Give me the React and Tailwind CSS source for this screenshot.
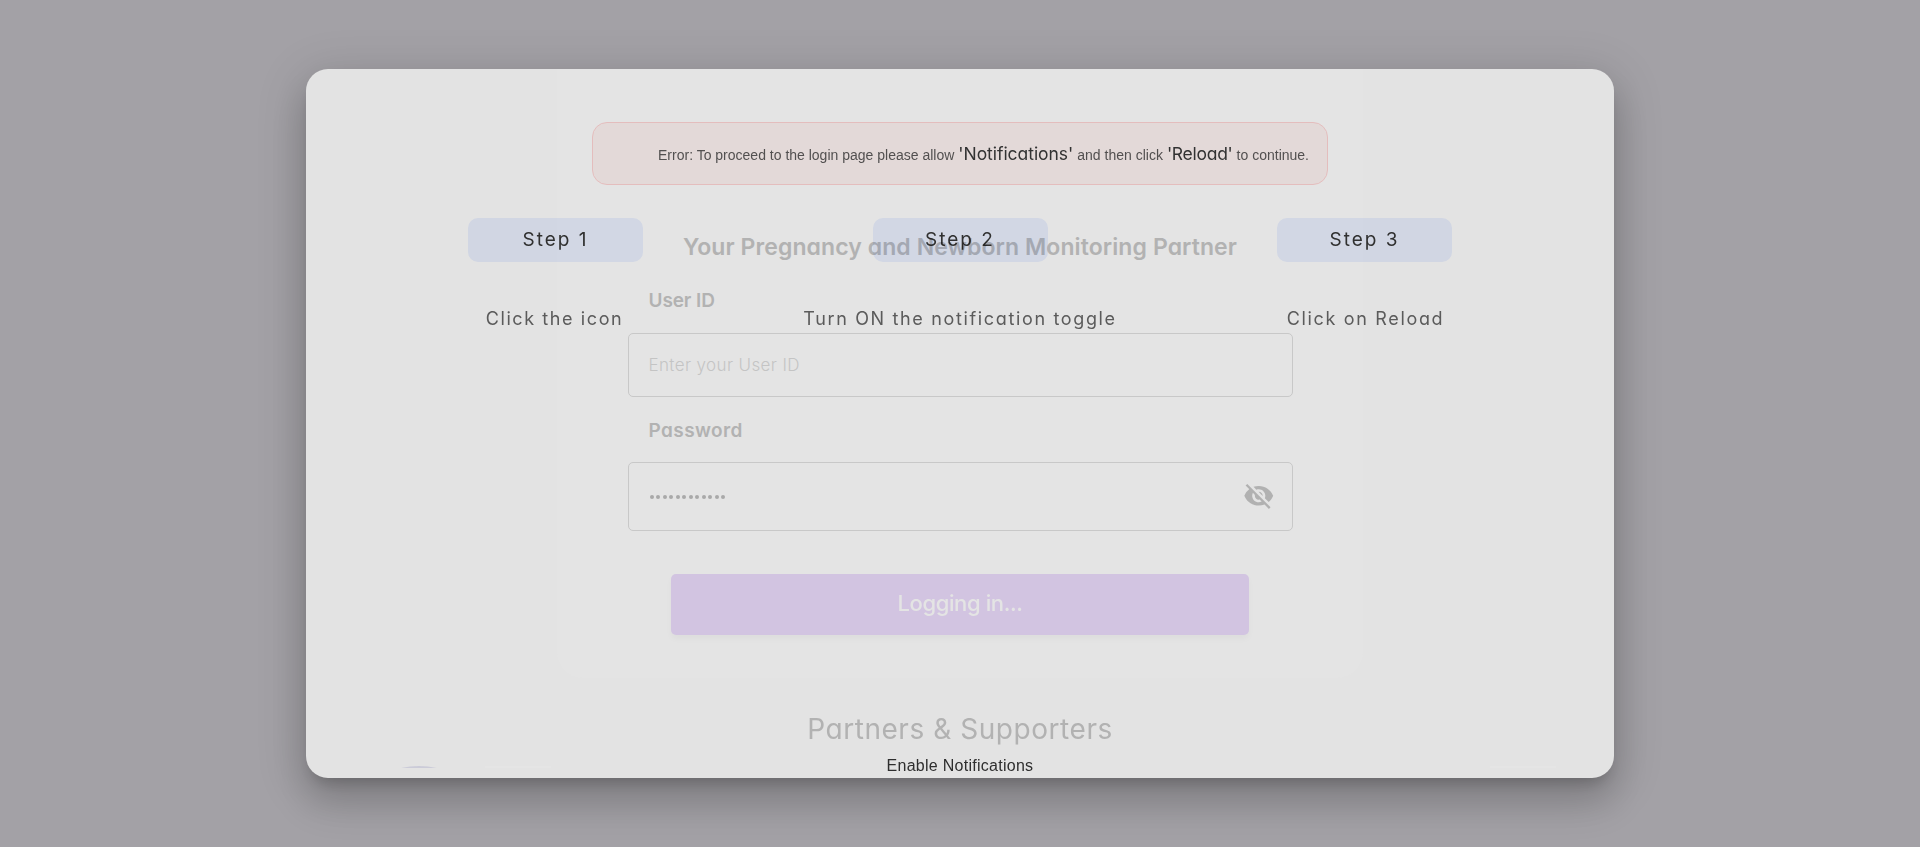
import React from 'react';
import { MdVisibilityOff } from 'react-icons/md';

const STEPS = [
  { title: 'Step 1', text: 'Click the icon', textClass: 'tracking-[1.59px] pr-[2px]' },
  { title: 'Step 2', text: 'Turn ON the notification toggle', textClass: 'tracking-[1.65px]' },
  { title: 'Step 3', text: 'Click on Reload', textClass: 'tracking-[1.67px] pl-[2px]' },
];

function PasswordDots() {
  return (
    <div className="flex gap-[2.52px] pt-[1px]">
      {Array.from({ length: 12 }, (_, i) => (
        <span key={i} className="size-[4px] rounded-full bg-[#a9a9a9]" />
      ))}
    </div>
  );
}

function LoginForm() {
  return (
    <div className="flex h-[609px] w-[806px] flex-col items-center rounded-b-[26px] bg-[#e4e4e4] pt-[160px] text-[#b2b2b2]">
      <h1 className="text-[23px] leading-[36px] font-semibold tracking-[0.093px] whitespace-nowrap">
        Your Pregnancy and Newborn Monitoring Partner
      </h1>
      <div className="mt-[22px] flex w-[665px] flex-col">
        <label className="pl-[21px] text-[19px] leading-[28px] font-semibold tracking-[-0.1px]">User ID</label>
        <div className="mt-[18px] flex h-[64px] items-center rounded-[5px] border border-[#c8c8c8] pt-[2px] pl-[20px] text-[17px] font-light tracking-[0.376px] text-[#c4c4c4]">
          Enter your User ID
        </div>
        <label className="mt-[20px] pl-[21px] text-[19px] leading-[28px] font-semibold tracking-[0.41px]">Password</label>
        <div className="mt-[17px] flex h-[69px] items-center justify-between rounded-[5px] border border-[#c8c8c8] pr-[17px] pb-[1px] pl-[21px]">
          <PasswordDots />
          <MdVisibilityOff className="size-[31.5px] text-[#b1b1b1]" />
        </div>
      </div>
      <button className="mt-[43px] h-[61px] w-[578px] rounded-[5px] bg-[#d2c4e1] pb-[2px] text-[22px] font-medium tracking-[-0.38px] text-[#e4e4e4] shadow-[0_4px_6px_rgba(0,0,0,0.03)]">
        Logging in...
      </button>
    </div>
  );
}

function LoginPage() {
  return (
    <div className="col-start-1 row-start-1 flex flex-col items-center">
      <LoginForm />
      <h2 className="mt-[31px] text-[28px] leading-[40px] font-normal tracking-[0.55px] text-[#b2b2b2]">
        Partners &amp; Supporters
      </h2>
      <div className="mt-[17px] flex h-[2px] w-full overflow-hidden pr-[58px] pl-[56px]">
        <div className="h-[80px] w-[114px] shrink-0 rounded-[50%] bg-[#cbcbd8]" />
        <div className="ml-[9px] h-[2px] w-[66px] bg-[#e5e5e5]" />
        <div className="ml-auto h-[2px] w-[66px] bg-[#e5e5e5]" />
      </div>
    </div>
  );
}

function NotificationGuide() {
  return (
    <div className="z-10 col-start-1 row-start-1 flex flex-col items-center mix-blend-multiply">
      <div className="mt-[53px] flex h-[63px] w-[736px] items-center justify-end rounded-[15px] border border-[#ffd4d4] bg-[#fef3f2] pt-[2px] pr-[18px] whitespace-nowrap">
        <p className="flex items-baseline gap-[4px] font-['Liberation_Sans',sans-serif] text-[14px] text-[#5c5959]">
          <span>Error: To proceed to the login page please allow</span>
          <span className="font-['Inter',sans-serif] text-[17.5px] tracking-[-0.04px] text-[#383838]">'Notifications'</span>
          <span>and then click</span>
          <span className="font-['Inter',sans-serif] text-[17.5px] tracking-[-0.27px] text-[#383838]">'Reload'</span>
          <span>to continue.</span>
        </p>
      </div>
      <div className="mt-[33px] grid grid-cols-[404px_405px_404px]">
        {STEPS.map((step) => (
          <div key={step.title} className="flex flex-col items-center">
            <div className="flex h-[44px] w-[175px] items-center justify-center rounded-[10px] bg-[#ebf1ff] text-[19px] tracking-[2px] text-[#363636]">
              {step.title}
            </div>
            <p className={`mt-[43px] text-[18px] leading-[28px] whitespace-nowrap text-[#666] ${step.textClass}`}>{step.text}</p>
          </div>
        ))}
      </div>
      <p className="mt-[421px] font-['Liberation_Sans',sans-serif] text-[16px] leading-[24px] tracking-[0.27px] text-[#333]">
        Enable Notifications
      </p>
    </div>
  );
}

export default function App() {
  return (
    <div className="flex h-[847px] items-center justify-center overflow-hidden bg-[#a3a1a6] font-['Inter',sans-serif] [font-feature-settings:'cv11']">
      <div className="isolate grid h-[709px] w-[1308px] rounded-[22px] bg-[#e3e3e3] shadow-[0_11px_15px_-7px_rgba(0,0,0,0.2),0_24px_38px_3px_rgba(0,0,0,0.14),0_9px_46px_8px_rgba(0,0,0,0.12)]">
        <LoginPage />
        <NotificationGuide />
      </div>
    </div>
  );
}
